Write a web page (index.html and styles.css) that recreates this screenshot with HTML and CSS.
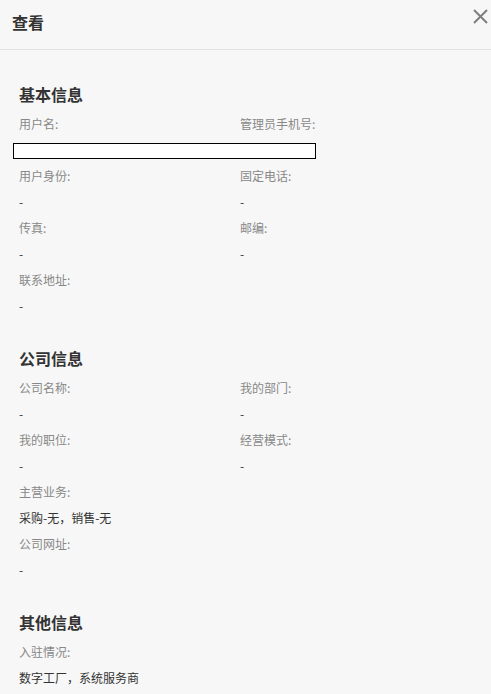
FILE: index.html
```html
<!DOCTYPE html>
<html lang="zh-CN">
<head>
<meta charset="utf-8">
<title>查看</title>
<link rel="stylesheet" href="styles.css">
</head>
<body>
<div class="dialog">
  <header class="dialog-header">
    <h1 class="dialog-title">查看</h1>
    <button class="close-btn" aria-label="关闭">
      <svg width="15" height="15" viewBox="0 0 15 15"><path d="M1 1 L14 14 M14 1 L1 14" stroke="#7f7f7f" stroke-width="2" fill="none"/></svg>
    </button>
  </header>
  <div class="dialog-body">
    <section class="section">
      <h2 class="section-title">基本信息</h2>
      <div class="grid">
        <div class="field">
          <div class="label">用户名:</div>
          <div class="value"><span class="input-box"></span></div>
        </div>
        <div class="field">
          <div class="label">管理员手机号:</div>
          <div class="value"></div>
        </div>
        <div class="field">
          <div class="label">用户身份:</div>
          <div class="value">-</div>
        </div>
        <div class="field">
          <div class="label">固定电话:</div>
          <div class="value">-</div>
        </div>
        <div class="field">
          <div class="label">传真:</div>
          <div class="value">-</div>
        </div>
        <div class="field">
          <div class="label">邮编:</div>
          <div class="value">-</div>
        </div>
        <div class="field">
          <div class="label">联系地址:</div>
          <div class="value">-</div>
        </div>
      </div>
    </section>
    <section class="section">
      <h2 class="section-title">公司信息</h2>
      <div class="grid">
        <div class="field">
          <div class="label">公司名称:</div>
          <div class="value">-</div>
        </div>
        <div class="field">
          <div class="label">我的部门:</div>
          <div class="value">-</div>
        </div>
        <div class="field">
          <div class="label">我的职位:</div>
          <div class="value">-</div>
        </div>
        <div class="field">
          <div class="label">经营模式:</div>
          <div class="value">-</div>
        </div>
        <div class="field">
          <div class="label">主营业务:</div>
          <div class="value">采购-无，销售-无</div>
        </div>
        <div class="field full">
          <div class="label">公司网址:</div>
          <div class="value">-</div>
        </div>
      </div>
    </section>
    <section class="section">
      <h2 class="section-title">其他信息</h2>
      <div class="grid">
        <div class="field">
          <div class="label">入驻情况:</div>
          <div class="value">数字工厂，系统服务商</div>
        </div>
      </div>
    </section>
  </div>
</div>
</body>
</html>
```
FILE: styles.css
```css
html, body {
  margin: 0;
  padding: 0;
  background: #f7f7f7;
}
body {
  font-family: "Noto Sans CJK SC", "Noto Sans", "Liberation Sans", sans-serif;
  color: #333;
}
.dialog {
  width: 491px;
  min-height: 694px;
  background: #f7f7f7;
}
.dialog-header {
  height: 50px;
  border-bottom: 1px solid #e1e1e1;
  display: flex;
  align-items: flex-start;
  justify-content: space-between;
  box-sizing: border-box;
}
.dialog-title {
  margin: 0;
  padding: 11px 0 0 12px;
  font-size: 16px;
  line-height: 22px;
  font-weight: bold;
  color: #333;
}
.close-btn {
  border: 0;
  background: transparent;
  padding: 0;
  margin: 9px 3px 0 0;
  width: 15px;
  height: 15px;
  display: flex;
  cursor: pointer;
}
.dialog-body {
  padding: 32px 0 0 19px;
}
.section {
  margin-bottom: 27px;
}
.section-title {
  margin: 0 0 5px;
  font-size: 16px;
  line-height: 24px;
  font-weight: bold;
  color: #333;
}
.grid {
  display: grid;
  grid-template-columns: 221px 221px;
}
.field {
  display: flex;
  flex-direction: column;
}
.field.full {
  grid-column: 1 / span 2;
}
.label, .value {
  font-size: 12px;
  line-height: 26px;
  height: 26px;
}
.label {
  color: #888;
}
.value {
  color: #333;
}
.input-box {
  display: block;
  margin: 6px 0 0 -6px;
  width: 301px;
  height: 14px;
  border: 1px solid #000;
  background: #fff;
}
```
